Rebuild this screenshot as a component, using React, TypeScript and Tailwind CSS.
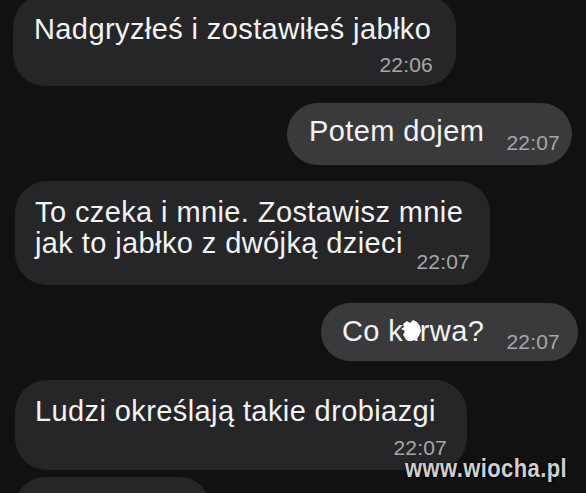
import React from 'react';

const msg = 'text-[29px] leading-[31px] tracking-[0.4px] text-[#f3f3f3] whitespace-nowrap';
const time = 'text-[21px] leading-[24px] tracking-[0.2px] text-[#a7a7a9] whitespace-nowrap';

// white splotch drawn over the censored letter
function Censored() {
  return (
    <span className="relative">
      u
      <svg className="absolute left-[-3px] top-[4px] w-[22px] h-[23px]" viewBox="0 0 22 23">
        <path
          fill="#ffffff"
          d="M3 5 L7 2 L10 4 L13 1 L17 3 L20 7 L21 12 L19 17 L15 21 L10 22 L6 20 L3 16 L5 12 L1 10 L4 8 Z"
        />
      </svg>
    </span>
  );
}

export default function App() {
  return (
    <div className="relative w-[586px] h-[493px] overflow-hidden bg-[#111112] font-['Liberation_Sans',Arial,sans-serif]">
      <div className="flex flex-col">
        {/* incoming */}
        <div className="-mt-[5px] ml-[13px] w-[443px] rounded-[32px] bg-[#262628] pl-[21px] pr-[23px] pt-[19px] pb-[9px] flex flex-col">
          <span className={msg}>Nadgryzłeś i zostawiłeś jabłko</span>
          <span className={time + ' self-end mt-[8px]'}>22:06</span>
        </div>

        {/* outgoing */}
        <div className="mt-[17px] ml-[287px] w-[285px] rounded-[32px] bg-[#3a3a3d] pl-[22px] pr-[12px] pt-[13px] pb-[10px] flex items-start">
          <span className={msg}>Potem dojem</span>
          <span className={time + ' ml-auto mt-[15px]'}>22:07</span>
        </div>

        <div className="mt-[16px] ml-[15px] w-[475px] rounded-[32px] bg-[#262628] pl-[20px] pr-[20px] pt-[16px] pb-[11px]">
          <div className={msg}>To czeka i mnie. Zostawisz mnie</div>
          <div className="flex items-start">
            <span className={msg}>jak to jabłko z dwójką dzieci</span>
            <span className={time + ' ml-auto mt-[22px]'}>22:07</span>
          </div>
        </div>

        <div className="mt-[18px] ml-[321px] w-[257px] rounded-[32px] bg-[#3a3a3d] pl-[21px] pr-[18px] pt-[13px] pb-[7px] flex items-start">
          <span className={msg}>
            Co k<Censored />rwa?
          </span>
          <span className={time + ' ml-auto mt-[14px]'}>22:07</span>
        </div>

        <div className="mt-[19px] ml-[15px] w-[452px] rounded-[32px] bg-[#262628] pl-[20px] pr-[20px] pt-[16px] pb-[12px] flex flex-col">
          <span className={msg}>Ludzi określają takie drobiazgi</span>
          <span className="self-end mt-[11px] text-[21px] leading-[20px] tracking-[0.2px] text-[#a7a7a9] whitespace-nowrap">
            22:07
          </span>
        </div>

        <div className="mt-[7px] ml-[15px] w-[195px] h-[60px] rounded-[32px] bg-[#262628]" />
      </div>

      {/* watermark */}
      <div className="absolute left-[405px] top-[460px] origin-top scale-y-[1.2] text-[22px] leading-[14px] tracking-[0.4px] font-bold text-[#cfcfcf] whitespace-nowrap [text-shadow:0_0_2px_#000,1px_1px_1px_#000]">
        www.wiocha.pl
      </div>
    </div>
  );
}
